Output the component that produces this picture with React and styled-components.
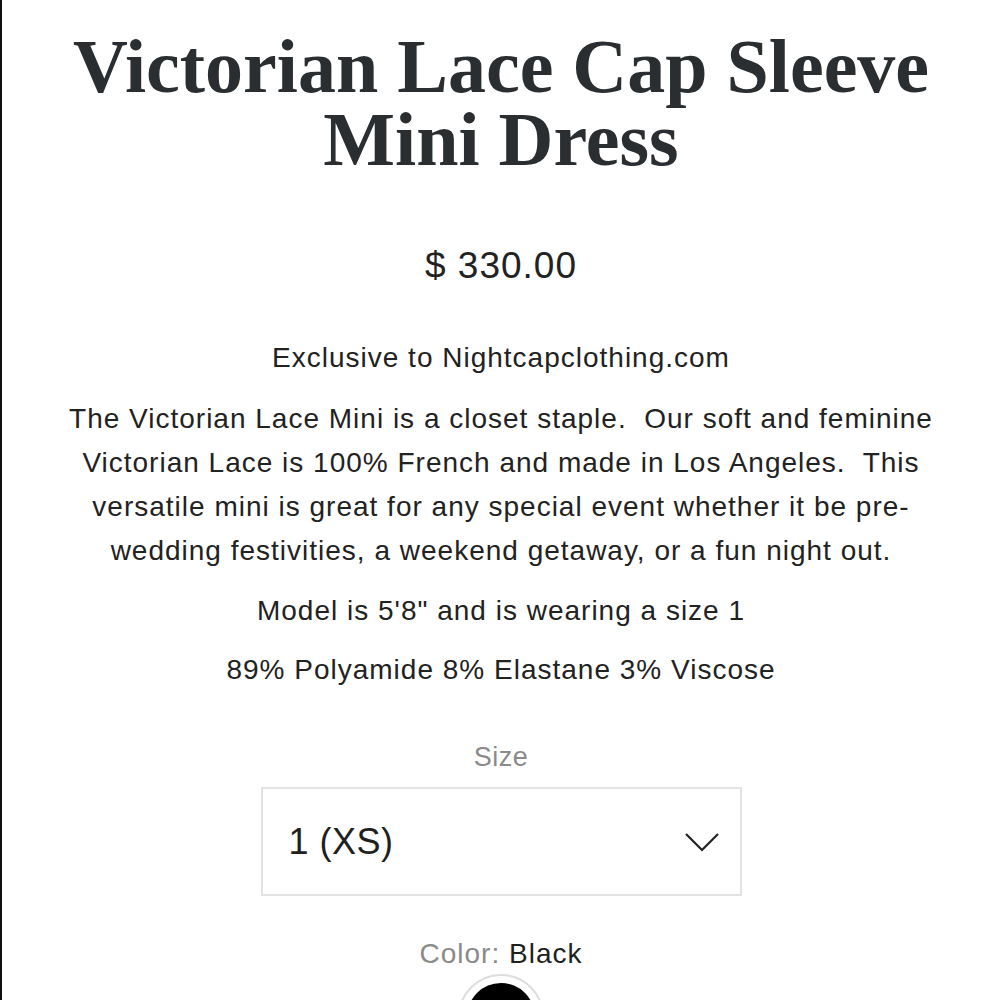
import React from 'react'
import styled, { createGlobalStyle } from 'styled-components'

const GlobalStyle = createGlobalStyle`
  html, body {
    margin: 0;
    padding: 0;
    background: #ffffff;
  }
  body {
    font-family: "Liberation Sans", Arial, sans-serif;
    color: #222222;
  }
`

const Page = styled.div`
  width: 1000px;
  height: 1000px;
  box-sizing: border-box;
  border-left: 2px solid #111111;
  overflow: hidden;
  display: flex;
  flex-direction: column;
  align-items: center;
  padding-top: 30px;

  & > * {
    flex-shrink: 0;
  }
`

const Title = styled.h1`
  margin: 0;
  font-family: "Liberation Serif", "Times New Roman", serif;
  font-weight: 700;
  font-size: 76px;
  line-height: 73px;
  color: #2b2e30;
  text-align: center;
`

const Price = styled.div`
  margin-top: 70px;
  font-size: 37px;
  line-height: 40px;
  letter-spacing: 1px;
  color: #222222;
`

const Paragraph = styled.p`
  margin: ${({ top }) => top || 0}px 0 0;
  font-size: 28px;
  line-height: 44px;
  letter-spacing: 1px;
  text-align: center;
  color: #222222;
`

const Label = styled.div`
  margin-top: 45px;
  font-size: 27px;
  line-height: 40px;
  letter-spacing: 0.5px;
  color: #8a8a8a;
`

const Select = styled.div`
  margin-top: 10px;
  width: 481px;
  height: 109px;
  box-sizing: border-box;
  border: 2px solid #e3e3e3;
  display: flex;
  align-items: center;
  justify-content: space-between;
  padding: 0 20px 0 26px;
  font-size: 36px;
  letter-spacing: 0.5px;
  color: #1f1f1f;
`

const ColorLabel = styled.div`
  margin-top: 38px;
  font-size: 28px;
  line-height: 40px;
  letter-spacing: 1px;
  color: #8a8a8a;

  span {
    color: #1f1f1f;
  }
`

const Swatch = styled.div`
  width: 86px;
  height: 86px;
  box-sizing: border-box;
  border-radius: 50%;
  border: 2px solid #dddddd;
  display: flex;
  align-items: center;
  justify-content: center;

  &::after {
    content: '';
    width: 68px;
    height: 68px;
    border-radius: 50%;
    background: #000000;
  }
`

function Chevron() {
  return (
    <svg width="36" height="22" viewBox="0 0 36 22" fill="none">
      <path d="M2 3 L18 19 L34 3" stroke="#222" strokeWidth="2.2" />
    </svg>
  )
}

export default function App() {
  return (
    <>
      <GlobalStyle />
      <Page>
        <Title>
          Victorian Lace Cap Sleeve<br />Mini Dress
        </Title>
        <Price>$ 330.00</Price>
        <Paragraph top={50}>Exclusive to Nightcapclothing.com</Paragraph>
        <Paragraph top={17}>
          The Victorian Lace Mini is a closet staple.&nbsp; Our soft and feminine<br />
          Victorian Lace is 100% French and made in Los Angeles.&nbsp; This<br />
          versatile mini is great for any special event whether it be pre-<br />
          wedding festivities, a weekend getaway, or a fun night out.
        </Paragraph>
        <Paragraph top={16}>Model is 5'8" and is wearing a size 1</Paragraph>
        <Paragraph top={15}>89% Polyamide 8% Elastane 3% Viscose</Paragraph>
        <Label>Size</Label>
        <Select>
          <span>1 (XS)</span>
          <Chevron />
        </Select>
        <ColorLabel>Color: <span>Black</span></ColorLabel>
        <Swatch />
      </Page>
    </>
  )
}
